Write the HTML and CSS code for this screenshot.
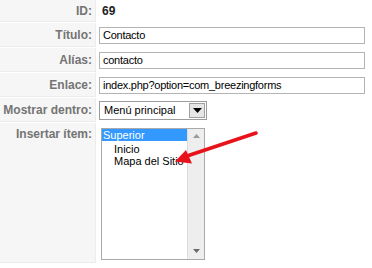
FILE: index.html
```html
<!DOCTYPE html>
<html>
<head>
<meta charset="utf-8">
<link rel="stylesheet" href="styles.css">
</head>
<body>
<div class="form">
  <div class="key key-first">ID:</div>
  <div class="val val-first"><b class="id">69</b></div>

  <div class="key">Título:</div>
  <div class="val"><div class="input">Contacto</div></div>

  <div class="key">Alías:</div>
  <div class="val"><div class="input">contacto</div></div>

  <div class="key">Enlace:</div>
  <div class="val"><div class="input">index.php?option=com_breezingforms</div></div>

  <div class="key">Mostrar dentro:</div>
  <div class="val">
    <div class="select">
      <span class="select-text">Menú principal</span>
      <span class="select-btn"><svg width="9" height="5" viewBox="0 0 9 5"><path d="M0 0h9L4.5 5z" fill="#000"/></svg></span>
    </div>
  </div>

  <div class="key key-top">Insertar ítem:</div>
  <div class="val val-top">
    <div class="listbox">
      <div class="options">
        <div class="opt opt-sel">Superior</div>
        <div class="opt opt-sub">Inicio</div>
        <div class="opt opt-sub">Mapa del Sitio</div>
      </div>
      <div class="scroll">
        <svg width="7" height="4" viewBox="0 0 7 4"><path d="M0 4L3.5 0L7 4z" fill="#9a9a9a"/></svg>
        <svg width="7" height="4" viewBox="0 0 7 4"><path d="M0 0h7L3.5 4z" fill="#6a6a6a"/></svg>
      </div>
    </div>
  </div>
</div>
<svg class="arrow" width="372" height="268" viewBox="0 0 372 268">
  <line x1="256" y1="133" x2="187" y2="156" stroke="#e8121a" stroke-width="3.6" stroke-linecap="round"/>
  <path d="M175 161.5L186 150L192 163.5z" fill="#e8121a"/>
</svg>
</body>
</html>
```
FILE: styles.css
```css
html, body {
  margin: 0;
  padding: 0;
  background: #fff;
}
body {
  width: 372px;
  height: 268px;
  overflow: hidden;
  position: relative;
  font-family: "Liberation Sans", Arial, sans-serif;
}
.form {
  display: grid;
  grid-template-columns: 96px 1fr;
  grid-template-rows: 22px 24px 24px 24px 24px 140px;
  row-gap: 1px;
  column-gap: 1px;
}
.key {
  background: #f6f6f6;
  border-bottom: 1px solid #ececec;
  border-right: 1px solid #ececec;
  box-sizing: border-box;
  color: #747474;
  font-weight: bold;
  font-size: 12px;
  text-align: right;
  padding-right: 3px;
  display: flex;
  align-items: center;
  justify-content: flex-end;
}
.key-top {
  align-items: flex-start;
  padding-top: 4px;
}
.val {
  display: flex;
  align-items: center;
  padding-left: 2px;
  font-size: 11px;
  color: #000;
}
.val-top {
  align-items: flex-start;
  padding-top: 5px;
  padding-left: 4px;
}
.id {
  font-size: 12px;
  color: #222;
  padding-left: 3px;
}
.input {
  width: 266px;
  height: 17px;
  box-sizing: border-box;
  border: 1px solid #b4b4b4;
  padding-left: 3px;
  line-height: 15px;
  font-size: 11px;
  letter-spacing: -0.25px;
}
.select {
  width: 108px;
  height: 19px;
  box-sizing: border-box;
  border: 1px solid #9c9c9c;
  display: flex;
  align-items: center;
  justify-content: space-between;
  padding: 0 1px 0 4px;
  font-size: 11px;
}
.select-btn {
  width: 16px;
  height: 15px;
  box-sizing: border-box;
  background: #e6e6e6;
  border: 1px solid #a0a0a0;
  display: flex;
  align-items: center;
  justify-content: center;
}
.listbox {
  width: 104px;
  height: 132px;
  box-sizing: border-box;
  border: 1px solid #a9a9a9;
  display: flex;
}
.options {
  flex: 1;
  padding-top: 0;
}
.opt {
  font-size: 11px;
  line-height: 12px;
  height: 12px;
  white-space: nowrap;
}
.opt-sel {
  background: #3399ff;
  color: #fff;
  padding-left: 1px;
}
.opt-sub {
  padding-left: 12px;
}
.opt-sel + .opt-sub {
  margin-top: 2px;
}
.scroll {
  width: 17px;
  background: #eeeeee;
  border-left: 1px solid #dcdcdc;
  display: flex;
  flex-direction: column;
  justify-content: space-between;
  align-items: center;
  padding: 5px 0 6px;
  box-sizing: border-box;
}
.arrow {
  position: absolute;
  left: 0;
  top: 0;
  pointer-events: none;
}
```
